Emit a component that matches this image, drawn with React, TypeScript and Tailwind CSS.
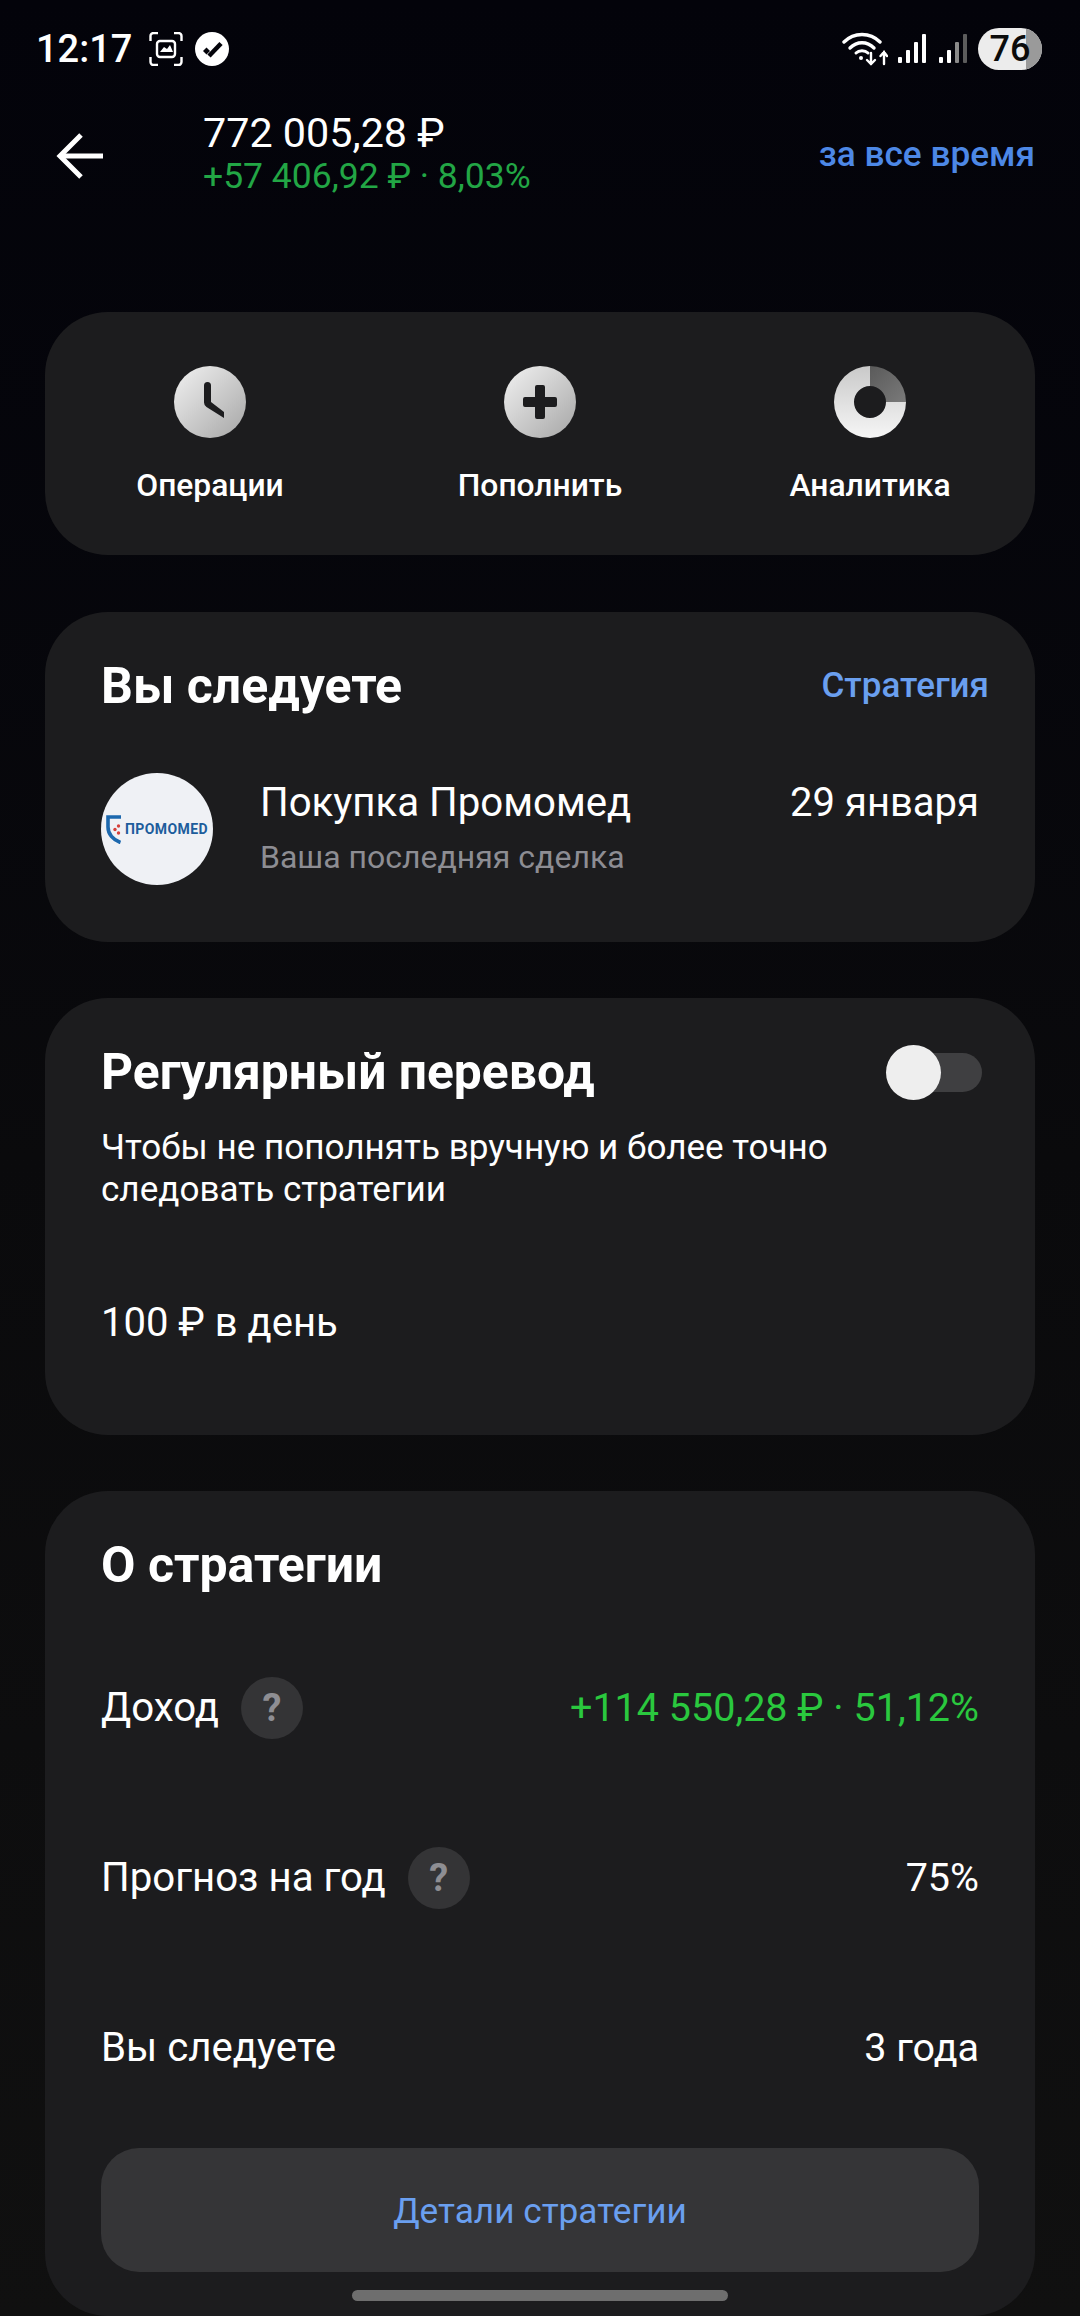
import React from "react";

const IconGrad = ({ id }: { id: string }) => (
  <linearGradient id={id} x1="0" y1="0" x2="1" y2="1">
    <stop offset="0" stopColor="#f2f2f2" />
    <stop offset="1" stopColor="#a6a6a6" />
  </linearGradient>
);

const ClockIcon = () => (
  <svg width="72" height="72" viewBox="0 0 72 72">
    <defs><IconGrad id="g1" /></defs>
    <circle cx="36" cy="36" r="36" fill="url(#g1)" />
    <path d="M30 19.5 a3.5 3.5 0 0 1 7 0 V36 L50 46 V52 L32.5 41 a5.5 5.5 0 0 1 -2.5 -4.5 Z" fill="#1c1c1e" />
  </svg>
);

const PlusIcon = () => (
  <svg width="72" height="72" viewBox="0 0 72 72">
    <defs><IconGrad id="g2" /></defs>
    <circle cx="36" cy="36" r="36" fill="url(#g2)" />
    <path d="M31 21 a2 2 0 0 1 2 -2 h6 a2 2 0 0 1 2 2 V31 H51 a2 2 0 0 1 2 2 v6 a2 2 0 0 1 -2 2 H41 V51 a2 2 0 0 1 -2 2 h-6 a2 2 0 0 1 -2 -2 V41 H21 a2 2 0 0 1 -2 -2 v-6 a2 2 0 0 1 2 -2 H31 Z" fill="#1c1c1e" />
  </svg>
);

const DonutIcon = () => (
  <svg width="72" height="72" viewBox="0 0 72 72">
    <defs>
      <linearGradient id="g3" x1="0" y1="0" x2="0" y2="1">
        <stop offset="0" stopColor="#c9c9c9" />
        <stop offset="1" stopColor="#f6f6f6" />
      </linearGradient>
      <linearGradient id="g4" x1="0" y1="0" x2="1" y2="1">
        <stop offset="0" stopColor="#5a5a5a" />
        <stop offset="1" stopColor="#7a7a7a" />
      </linearGradient>
    </defs>
    <path d="M36 0 A36 36 0 1 0 72 36 H52 A16 16 0 1 1 36 20 Z" fill="url(#g3)" />
    <path d="M36 0 A36 36 0 0 1 72 36 H52 A16 16 0 0 0 36 20 Z" fill="url(#g4)" />
  </svg>
);

const BackArrow = () => (
  <svg width="50" height="48" viewBox="0 0 50 48" fill="none" stroke="#fff" strokeWidth="5">
    <path d="M48 24 H5" />
    <path d="M26 3 L5 24 L26 45" />
  </svg>
);

const StatusBar = () => (
  <div className="flex h-[96px] items-center justify-between pl-[36px] pr-[38px] pt-[1px]">
    <div className="flex items-center">
      <span className="text-[38px] font-medium leading-none text-white">12:17</span>
      <svg className="ml-[17px]" width="34" height="34" viewBox="0 0 34 34" fill="none" stroke="#fff" strokeWidth="2.4">
        <path d="M1.5 9 V4 a3 3 0 0 1 3 -3 H9 M25 1 h4.5 a3 3 0 0 1 3 3 V9 M32.5 25 v5 a3 3 0 0 1 -3 3 H25 M9 33 H4.5 a3 3 0 0 1 -3 -3 V25" />
        <rect x="8" y="9" width="18" height="16" rx="3" />
        <path d="M11 20 l4 -5 3 2 3 -4 3 7 Z" fill="#fff" stroke="none" />
      </svg>
      <svg className="ml-[12px]" width="34" height="34" viewBox="0 0 34 34">
        <circle cx="17" cy="17" r="17" fill="#fff" />
        <path d="M8 19 l3.5 -3.5 3.5 3.5 -3.5 3.5 Z" fill="#03030a" />
        <path d="M14 24 L26 11.5" stroke="#03030a" strokeWidth="4.5" fill="none" />
      </svg>
    </div>
    <div className="flex items-center">
      <svg width="46" height="34" viewBox="0 0 46 34" fill="none" stroke="#fff" strokeWidth="3.4" strokeLinecap="round">
        <path d="M2 10 C12 0 28 0 38 10" />
        <path d="M8 16 C15 9 25 9 32 16" />
        <path d="M14 21 C17 18 23 18 26 21" strokeWidth="3" />
        <circle cx="19" cy="26" r="2" fill="#fff" stroke="none" />
        <path d="M29 21 V32 M25 28 L29 32 L33 28" strokeWidth="2.4" />
        <path d="M42 32 V20 M38.5 24 L42 20 L45 24" strokeWidth="2.4" />
      </svg>
      <svg className="ml-[10px]" width="28" height="30" viewBox="0 0 28 30" fill="#fff">
        <rect x="0" y="23" width="4" height="6" rx="1" />
        <rect x="8" y="16" width="4" height="13" rx="1" />
        <rect x="16" y="8" width="4" height="21" rx="1" />
        <rect x="24" y="0" width="4" height="29" rx="1" />
      </svg>
      <svg className="ml-[13px]" width="28" height="30" viewBox="0 0 28 30" fill="#fff">
        <rect x="0" y="23" width="4" height="6" rx="1" />
        <rect x="8" y="16" width="4" height="13" rx="1" />
        <rect x="16" y="8" width="4" height="21" rx="1" fill="#8a8a8a" />
        <rect x="24" y="0" width="4" height="29" rx="1" fill="#5c5c5c" />
      </svg>
      <div className="relative ml-[11px] flex h-[42px] w-[64px] items-center justify-center overflow-hidden rounded-full bg-[#ececec]">
        <div className="absolute inset-y-0 right-0 w-[16px] bg-[#9a9a9a]" />
        <span className="relative text-[36px] font-medium leading-none text-[#0b0b0b]">76</span>
      </div>
    </div>
  </div>
);

const Header = () => (
  <div className="flex h-[120px] items-center pl-[55px] pr-[45px]">
    <BackArrow />
    <div className="ml-[98px] mt-[-6px] flex flex-col">
      <span className="text-[41.3px] leading-[46px] text-white">772 005,28 ₽</span>
      <span className="text-[35.5px] leading-[41px] text-[#22a645]">+57 406,92 ₽ · 8,03%</span>
    </div>
    <span className="ml-auto mt-[-4px] text-[35.2px] font-medium text-[#4d88e6]">за все время</span>
  </div>
);

const Action = ({ icon, label }: { icon: React.ReactNode; label: string }) => (
  <div className="flex flex-1 flex-col items-center">
    {icon}
    <span className="mt-[29px] text-[31.8px] font-medium leading-[36px] text-white">{label}</span>
  </div>
);

const Help = () => (
  <div className="flex h-[62px] w-[62px] items-center justify-center rounded-full bg-[#343436] text-[38px] font-bold leading-none text-[#8e8e93]">?</div>
);

const Logo = () => (
  <div className="flex h-[112px] w-[112px] shrink-0 items-center justify-center gap-[4px] overflow-hidden rounded-full bg-[#eff1f5]">
    <svg width="15" height="29" viewBox="0 0 15 29" className="shrink-0">
      <path d="M15 2 H2 V12 C2 19 7 25 14.5 27.5" fill="none" stroke="#1c68ae" strokeWidth="3.6" />
      <circle cx="12.5" cy="11" r="1.7" fill="#d6413c" />
      <circle cx="9" cy="14.5" r="1.7" fill="#d6413c" />
      <circle cx="12.5" cy="18" r="1.7" fill="#d6413c" />
    </svg>
    <span className="text-[14px] font-bold leading-none tracking-[0.4px] text-[#1d5d9c]">ПРОМОМЕD</span>
  </div>
);

const Row = ({ left, right, help, green }: { left: string; right: string; help?: boolean; green?: boolean }) => (
  <div className="flex h-[62px] items-center justify-between">
    <div className="flex items-center gap-[22px]">
      <span className="text-[40.2px] text-white">{left}</span>
      {help && <Help />}
    </div>
    <span className={green ? "text-[39.5px] text-[#2ac83e]" : "text-[39.5px] text-white"}>{right}</span>
  </div>
);

export default function App() {
  return (
    <div
      className="relative h-[2316px] w-[1080px] overflow-hidden bg-gradient-to-b from-[#03030a] via-[#0a0a0c] to-[#101010]"
      style={{ fontFamily: "Roboto, 'Liberation Sans', sans-serif" }}
    >
      <StatusBar />
      <Header />
      <div className="mt-[96px] flex flex-col gap-[57px] px-[45px]">
        <div className="flex h-[243px] rounded-[63px] bg-[#1c1c1e] pt-[54px]">
          <Action icon={<ClockIcon />} label="Операции" />
          <Action icon={<PlusIcon />} label="Пополнить" />
          <Action icon={<DonutIcon />} label="Аналитика" />
        </div>

        <div className="mb-[-1px] h-[330px] rounded-[63px] bg-[#1c1c1e] pl-[56px] pr-[46px]">
          <div className="flex h-[148px] items-center justify-between">
            <span className="text-[50px] font-bold text-white">Вы следуете</span>
            <span className="text-[35px] font-medium text-[#6a9fef]">Стратегия</span>
          </div>
          <div className="mt-[13px] flex items-center pr-[10px]">
            <Logo />
            <div className="ml-[47px] flex flex-col pb-[4px]">
              <span className="text-[40.2px] leading-[46px] text-white">Покупка Промомед</span>
              <span className="mt-[13px] text-[32px] leading-[36px] text-[#8d8d93]">Ваша последняя сделка</span>
            </div>
            <span className="ml-auto self-start pt-[7px] text-[40px] leading-[46px] text-white">29 января</span>
          </div>
        </div>

        <div className="mb-[-1px] h-[437px] rounded-[63px] bg-[#1c1c1e] pl-[56px] pr-[53px]">
          <div className="flex h-[148px] items-center justify-between">
            <span className="text-[49.8px] font-bold text-white">Регулярный перевод</span>
            <div className="relative h-[39px] w-[92px] rounded-full bg-[#3f3f41]">
              <div className="absolute left-[-4px] top-[-8px] h-[55px] w-[55px] rounded-full bg-[#eeeeee]" />
            </div>
          </div>
          <p className="mt-[-20px] text-[35.1px] leading-[42px] text-white">
            Чтобы не пополнять вручную и более точно
            <br />
            следовать стратегии
          </p>
          <p className="mt-[90px] text-[40px] leading-[46px] text-white">100 ₽ в день</p>
        </div>

        <div className="h-[825px] rounded-[63px] bg-[#1c1c1e] px-[56px]">
          <div className="flex h-[148px] items-center">
            <span className="text-[50px] font-bold text-white">О стратегии</span>
          </div>
          <div className="mt-[38px] flex flex-col gap-[108px]">
            <Row left="Доход" right="+114 550,28 ₽ · 51,12%" help green />
            <Row left="Прогноз на год" right="75%" help />
            <Row left="Вы следуете" right="3 года" />
          </div>
          <div className="mt-[69px] flex h-[124px] items-center justify-center rounded-[38px] bg-[#353537] pt-[3px] text-[35.2px] text-[#6a9fef]">
            Детали стратегии
          </div>
        </div>
      </div>
      <div className="absolute bottom-[15px] left-[352px] h-[11px] w-[376px] rounded-full bg-[#6e6e6e]" />
    </div>
  );
}
